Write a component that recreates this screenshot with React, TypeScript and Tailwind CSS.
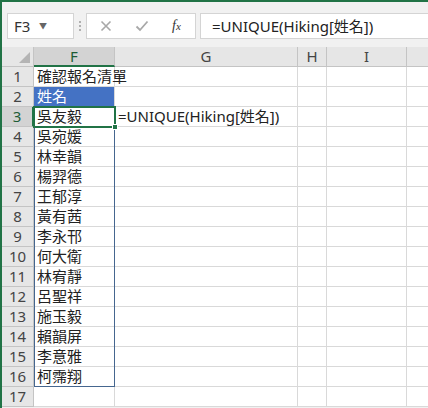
import React from "react";

const names = [
  "確認報名清單",
  "姓名",
  "吳友毅",
  "吳宛媛",
  "林幸韻",
  "楊羿德",
  "王郁淳",
  "黃有茜",
  "李永邗",
  "何大衛",
  "林宥靜",
  "呂聖祥",
  "施玉毅",
  "賴韻屏",
  "李意雅",
  "柯霈翔",
  "",
];

const font = { fontFamily: '"Noto Sans", "Noto Sans CJK TC", sans-serif' };

export default function App() {
  return (
    <div
      className="w-[428px] h-[408px] overflow-hidden border-l-2 border-t-2 border-[#217346] bg-[#f1f1f1] text-[#222]"
      style={font}
    >
      {/* formula bar */}
      <div className="h-[45px] flex items-start pt-[11px] pl-[5px]">
        <div className="w-[67px] h-[26px] bg-white border border-[#d4d4d4] flex items-center pl-[6px] pr-[4px]">
          <span className="text-[15px] leading-none text-[#333]">F3</span>
          <span className="ml-auto mr-[22px] text-[8px] text-[#666]">▼</span>
        </div>
        <div className="w-[12px] h-[26px] flex flex-col items-center justify-center gap-[2px]">
          <span className="w-[2px] h-[2px] bg-[#b0b0b0]" />
          <span className="w-[2px] h-[2px] bg-[#b0b0b0]" />
          <span className="w-[2px] h-[2px] bg-[#b0b0b0]" />
        </div>
        <div className="w-[110px] h-[26px] bg-white border border-[#d4d4d4] flex items-center">
          <svg width="12" height="12" viewBox="0 0 12 12" className="ml-[13px]">
            <path d="M1.5 1.5 L10.5 10.5 M10.5 1.5 L1.5 10.5" stroke="#a8a8a8" strokeWidth="1.6" />
          </svg>
          <svg width="14" height="12" viewBox="0 0 14 12" className="ml-[23px]">
            <path d="M1.5 6.5 L5 10 L12.5 1.5" stroke="#a8a8a8" strokeWidth="1.8" fill="none" />
          </svg>
          <span
            className="ml-[23px] text-[14px] italic text-[#333] leading-none"
            style={{ fontFamily: '"Liberation Serif", serif' }}
          >
            f<span className="text-[11px]">x</span>
          </span>
        </div>
        <div className="flex-1 h-[26px] ml-[4px] bg-white border border-[#d4d4d4] border-r-0 flex items-center pl-[11px]">
          <span className="text-[15px] leading-none text-[#222]">=UNIQUE(Hiking[姓名])</span>
        </div>
      </div>

      {/* grid */}
      <div className="relative">
        <div className="grid grid-cols-[32px_81px_183px_29px_80px_1fr] auto-rows-[20px] bg-white text-[15px]">
          {/* header row */}
          <div className="bg-[#e6e6e6] border-r border-b border-[#c4c4c4] relative">
            <svg width="11" height="11" viewBox="0 0 11 11" className="absolute right-[3px] bottom-[3px]">
              <path d="M11 0 L11 11 L0 11 Z" fill="#b4b4b4" />
            </svg>
          </div>
          <div className="bg-[#d3d3d3] border-r border-[#c4c4c4] border-b-2 border-b-[#217346] flex items-center justify-center text-[#1d5c36]">
            F
          </div>
          <div className="bg-[#e6e6e6] border-r border-b border-[#c4c4c4] flex items-center justify-center text-[#444]">
            G
          </div>
          <div className="bg-[#e6e6e6] border-r border-b border-[#c4c4c4] flex items-center justify-center text-[#444]">
            H
          </div>
          <div className="bg-[#e6e6e6] border-r border-b border-[#c4c4c4] flex items-center justify-center text-[#444]">
            I
          </div>
          <div className="bg-[#e6e6e6] border-b border-[#c4c4c4]" />

          {names.map((n, i) => {
            const row = i + 1;
            const isSel = row === 3;
            return (
              <React.Fragment key={row}>
                <div
                  className={
                    isSel
                      ? "bg-[#d3d3d3] border-b border-[#c4c4c4] border-r-2 border-r-[#217346] flex items-center justify-center text-[#1d5c36]"
                      : "bg-[#e6e6e6] border-r border-b border-[#c4c4c4] flex items-center justify-center text-[#444]"
                  }
                >
                  {row}
                </div>
                <div
                  className={
                    row === 2
                      ? "bg-[#4472c4] text-white border-r border-b border-[#d9d9d9] flex items-center pl-[3px] whitespace-nowrap"
                      : "border-r border-b border-[#d9d9d9] flex items-center pl-[3px] whitespace-nowrap"
                  }
                >
                  {n}
                </div>
                <div className="border-r border-b border-[#d9d9d9] flex items-center pl-[3px] whitespace-nowrap">
                  {row === 3 ? "=UNIQUE(Hiking[姓名])" : ""}
                </div>
                <div className="border-r border-b border-[#d9d9d9]" />
                <div className="border-r border-b border-[#d9d9d9]" />
                <div className="border-b border-[#d9d9d9]" />
              </React.Fragment>
            );
          })}
        </div>

        {/* spill range border F3:F16 */}
        <div className="absolute left-[32px] top-[60px] w-[81px] h-[280px] border border-[#45668f] pointer-events-none" />
        {/* active cell F3 */}
        <div className="absolute left-[31px] top-[59px] w-[83px] h-[22px] border-2 border-[#217346] pointer-events-none">
          <div className="absolute right-[-4px] bottom-[-4px] w-[6px] h-[6px] bg-[#217346] border border-white" />
        </div>
      </div>
    </div>
  );
}
